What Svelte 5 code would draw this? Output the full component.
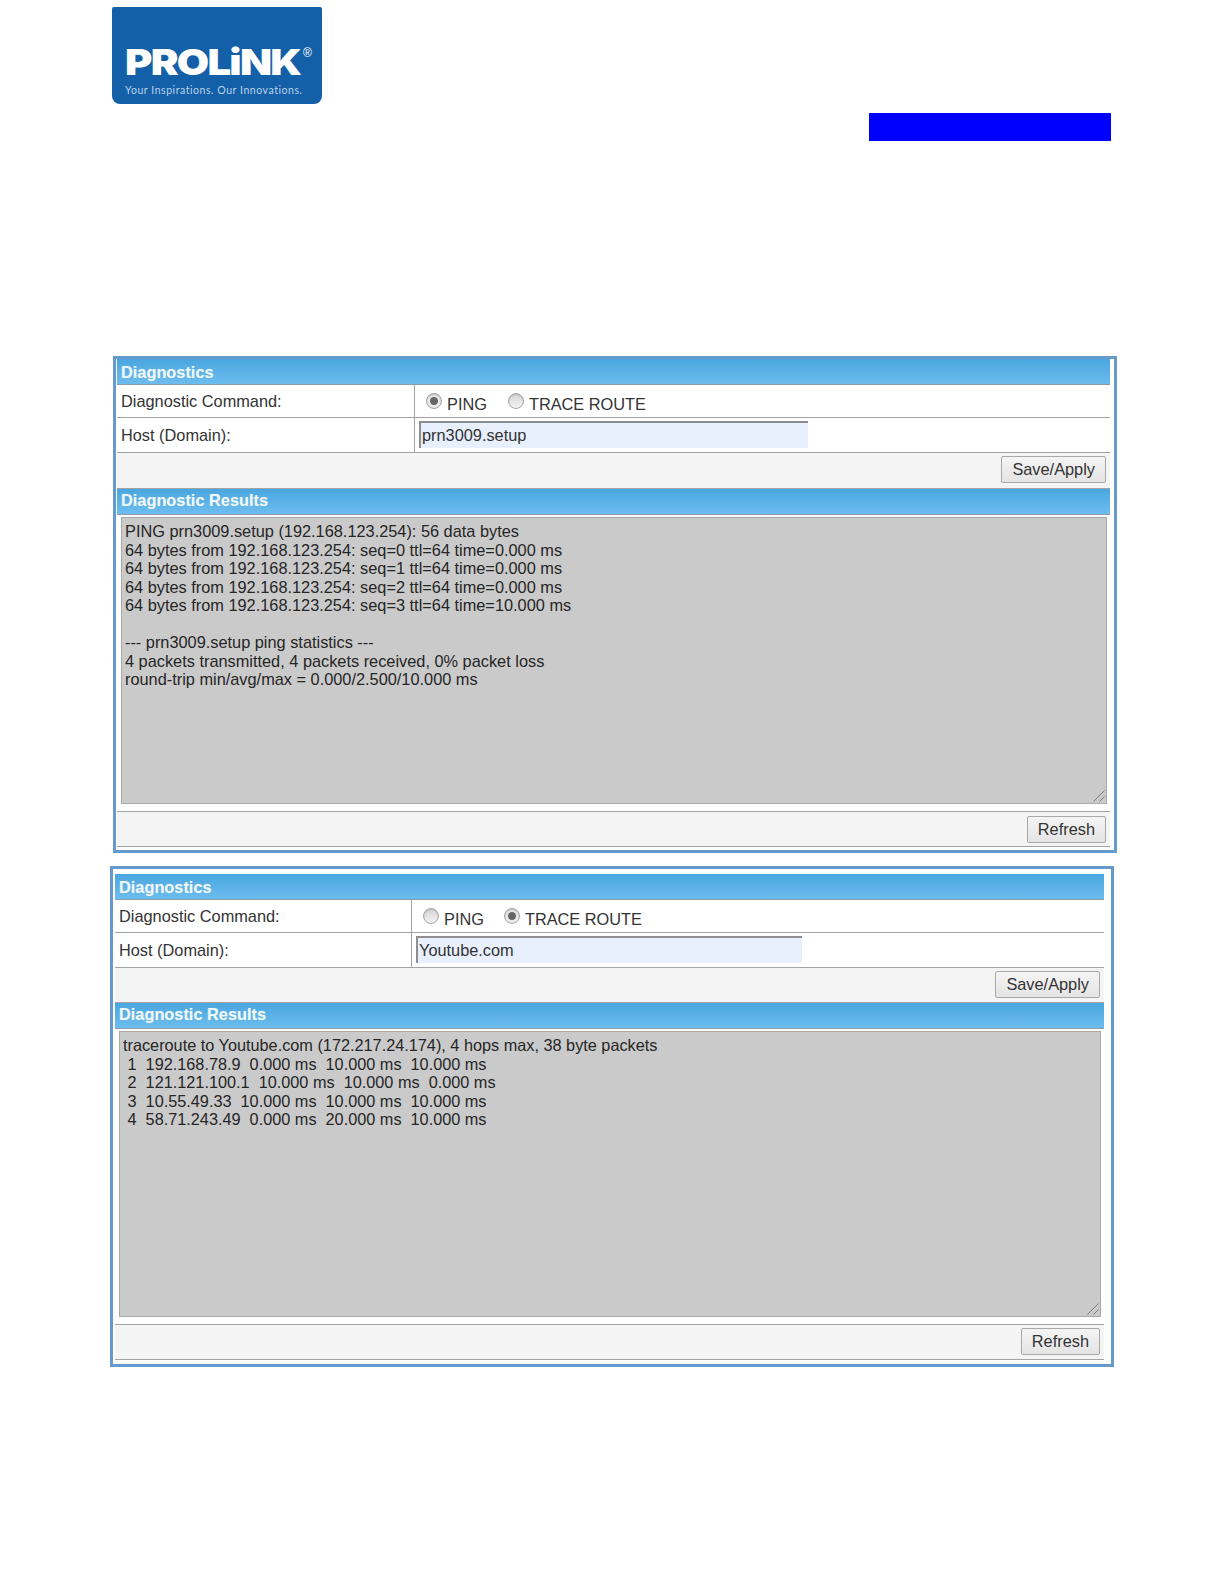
<script>
	const panels = [
		{
			cls: 'first',
			traceroute: false,
			host: 'prn3009.setup',
			output: `PING prn3009.setup (192.168.123.254): 56 data bytes
64 bytes from 192.168.123.254: seq=0 ttl=64 time=0.000 ms
64 bytes from 192.168.123.254: seq=1 ttl=64 time=0.000 ms
64 bytes from 192.168.123.254: seq=2 ttl=64 time=0.000 ms
64 bytes from 192.168.123.254: seq=3 ttl=64 time=10.000 ms

--- prn3009.setup ping statistics ---
4 packets transmitted, 4 packets received, 0% packet loss
round-trip min/avg/max = 0.000/2.500/10.000 ms`
		},
		{
			cls: 'second',
			traceroute: true,
			host: 'Youtube.com',
			output: `traceroute to Youtube.com (172.217.24.174), 4 hops max, 38 byte packets
 1  192.168.78.9  0.000 ms  10.000 ms  10.000 ms
 2  121.121.100.1  10.000 ms  10.000 ms  0.000 ms
 3  10.55.49.33  10.000 ms  10.000 ms  10.000 ms
 4  58.71.243.49  0.000 ms  20.000 ms  10.000 ms`
		}
	];
</script>

<div class="page">
	<header class="top">
		<div class="logo">
			<span class="brand">PROLiNK</span>
			<span class="reg">®</span>
			<span class="tagline">Your Inspirations. Our Innovations.</span>
		</div>
		<div class="bar"></div>
	</header>

	{#each panels as panel}
		<section class="panel {panel.cls}">
			<div class="head">Diagnostics</div>
			<div class="row cmd">
				<div class="label">Diagnostic Command:</div>
				<div class="field radios">
					<label><input type="radio" name={panel.cls} checked={!panel.traceroute} /><span>PING</span></label>
					<label><input type="radio" name={panel.cls} checked={panel.traceroute} /><span>TRACE ROUTE</span></label>
				</div>
			</div>
			<div class="row host">
				<div class="label">Host (Domain):</div>
				<div class="field"><input class="text" type="text" value={panel.host} /></div>
			</div>
			<div class="actions save"><button>Save/Apply</button></div>
			<div class="head results">Diagnostic Results</div>
			<div class="output">
				<textarea readonly value={panel.output}></textarea>
				<svg class="grip" width="12" height="12" viewBox="0 0 12 12">
					<path d="M0.5 11.5 L11.5 0.5 M6.5 11.5 L11.5 6.5" stroke="#7d7d7d" fill="none" />
				</svg>
			</div>
			<div class="actions refresh"><button>Refresh</button></div>
		</section>
	{/each}
</div>

<style>
	:global(body) {
		background: #fff;
	}

	.page {
		width: 1224px;
		height: 1584px;
		overflow: hidden;
		font-family: 'Liberation Sans', Arial, sans-serif;
		font-size: 16.33px;
		color: #333;
	}

	.top {
		padding: 7px 113px 0 112px;
		display: flex;
		flex-direction: column;
	}

	.logo {
		position: relative;
		width: 210px;
		height: 97px;
		box-sizing: border-box;
		padding: 37px 0 0 13px;
		background: #1460a8;
		border-radius: 2px 2px 8px 8px;
		color: #fff;
		display: flex;
		flex-direction: column;
	}

	.brand {
		font-family: Inter, sans-serif;
		font-weight: 900;
		font-size: 36px;
		line-height: 36px;
		letter-spacing: -1.5px;
		white-space: nowrap;
		transform: scaleX(1.16);
		transform-origin: left center;
	}

	.reg {
		position: absolute;
		left: 191px;
		top: 39px;
		font-family: 'Liberation Sans', sans-serif;
		font-size: 12px;
		line-height: 14px;
	}

	.tagline {
		font-family: Lato, sans-serif;
		font-size: 10.5px;
		line-height: 14px;
		letter-spacing: 0.55px;
		margin-top: 3px;
		color: #b9d3ea;
		white-space: nowrap;
	}

	.bar {
		align-self: flex-end;
		width: 242px;
		height: 28px;
		margin-top: 9px;
		background: #0000ff;
	}

	.panel {
		box-sizing: border-box;
		width: 1004px;
		border: 3px solid #6699cc;
		background: #fff;
		margin-left: 113px;
		margin-top: 215px;
		padding: 0 4px 3px 1px;
	}

	.panel.second {
		margin-left: 110px;
		margin-top: 13px;
		padding: 5px 7px 4px 2px;
	}

	.head {
		height: 26px;
		box-sizing: border-box;
		padding-left: 4px;
		background: linear-gradient(#4aa6e0, #6cbdee);
		border-bottom: 1px solid #8f9ba5;
		color: #eef7fd;
		font-weight: 700;
		line-height: 26px;
		text-shadow: 0 0 1px #9cc;
	}

	.head.results {
		line-height: 23px;
	}

	.row {
		display: grid;
		grid-template-columns: 298px 1fr;
		box-sizing: border-box;
		border-bottom: 1px solid #a3a3a3;
	}

	.second .row {
		grid-template-columns: 297px 1fr;
	}

	.row.cmd {
		height: 33px;
	}

	.row.host {
		height: 35px;
	}

	.label {
		padding-left: 4px;
		border-right: 1px solid #a3a3a3;
		line-height: 33px;
	}

	.host .label {
		line-height: 34px;
	}

	.field {
		padding-left: 4px;
		min-width: 0;
	}

	.radios {
		display: flex;
		gap: 21px;
		padding-left: 11px;
	}

	.second .radios {
		gap: 20px;
	}

	.radios label {
		display: flex;
		gap: 5px;
	}

	.radios span {
		line-height: 38px;
		height: 32px;
	}

	.radios input {
		appearance: none;
		box-sizing: border-box;
		width: 16px;
		height: 16px;
		margin: 8px 0 0;
		border-radius: 50%;
		border: 1px solid #a5a5a5;
		background: linear-gradient(#d4d4d4, #f4f4f4);
		box-shadow: inset 0 1px 1px #bbb;
	}

	.radios input:checked {
		background: radial-gradient(circle, #666 0 3.5px, #e8e8e8 4.5px);
	}

	.text {
		display: block;
		box-sizing: border-box;
		width: 389px;
		height: 27px;
		margin: 3px 0 0;
		padding: 0 0 0 1px;
		font: inherit;
		color: #333;
		background: #e8f0fe;
		border-style: solid;
		border-width: 2px 0 0 2px;
		border-color: #8e8e8e;
		outline: none;
	}

	.second .text {
		width: 386px;
	}

	.actions {
		height: 36px;
		box-sizing: border-box;
		background: #f4f4f4;
		border-bottom: 1px solid #a3a3a3;
		padding: 3px 4px 0 0;
		display: flex;
		justify-content: flex-end;
	}

	.second .actions {
		height: 35px;
	}

	.actions.refresh {
		border-top: 1px solid #a3a3a3;
		padding-top: 4px;
	}

	.second .actions.refresh {
		height: 36px;
		padding-top: 3px;
	}

	button {
		height: 27px;
		padding: 0 10px;
		font: inherit;
		color: #333;
		background: linear-gradient(#f4f4f4, #e4e4e4);
		border: 1px solid #a8a8a8;
		border-radius: 2px;
	}

	.output {
		position: relative;
		height: 296px;
		box-sizing: border-box;
		padding: 2px 3px 7px 4px;
	}

	.second .output {
		height: 295px;
	}

	textarea {
		display: block;
		box-sizing: border-box;
		width: 100%;
		height: 100%;
		margin: 0;
		padding: 4px 3px;
		font: inherit;
		line-height: 18.5px;
		color: #262626;
		background: #cacaca;
		border: 1px solid #a9a9a9;
		outline: none;
		white-space: pre;
		overflow: hidden;
		resize: none;
	}

	.second textarea {
		font-size: 16.27px;
	}

	.grip {
		position: absolute;
		right: 5px;
		bottom: 9px;
	}
</style>
